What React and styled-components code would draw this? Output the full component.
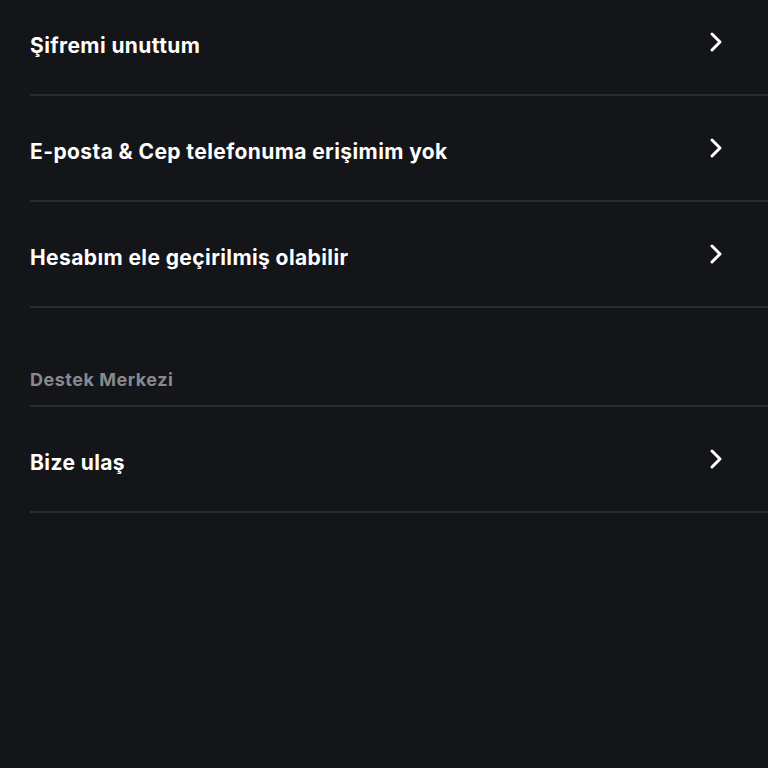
import React from "react"
import styled, { createGlobalStyle } from "styled-components"

const GlobalStyle = createGlobalStyle`
  html, body {
    margin: 0;
    padding: 0;
    background: #141519;
  }
  body {
    font-family: Inter, "Noto Sans", "Liberation Sans", sans-serif;
    -webkit-font-smoothing: antialiased;
  }
`

const Page = styled.div`
  width: 768px;
  height: 768px;
  overflow: hidden;
  background: #141519;
  padding-left: 30px;
  box-sizing: border-box;
`

const List = styled.div`
  display: flex;
  flex-direction: column;
  margin-top: ${p => p.$offset || 0}px;
`

const Row = styled.div`
  display: flex;
  align-items: center;
  justify-content: space-between;
  height: 104px;
  padding-right: 45px;
  border-bottom: 2px solid #2b2c30;
  cursor: pointer;
`

const Label = styled.span`
  color: #ffffff;
  font-size: 21px;
  font-weight: 700;
  letter-spacing: 0.4px;
  padding-top: 7px;
`

const SectionTitle = styled.div`
  color: #88898d;
  font-size: 18px;
  font-weight: 700;
  letter-spacing: 0.5px;
  padding: 61px 0 15px;
  border-bottom: 2px solid #2b2c30;
`

const Chevron = () => (
  <svg width="14" height="22" viewBox="0 0 14 22" fill="none">
    <path d="M3 3l8 8-8 8" stroke="#fff" strokeWidth="3" strokeLinecap="round" strokeLinejoin="round" />
  </svg>
)

const items = [
  "Şifremi unuttum",
  "E-posta & Cep telefonuma erişimim yok",
  "Hesabım ele geçirilmiş olabilir",
]

export default function App() {
  return (
    <Page>
      <GlobalStyle />
      <List $offset={-10}>
        {items.map(t => (
          <Row key={t}>
            <Label>{t}</Label>
            <Chevron />
          </Row>
        ))}
      </List>
      <SectionTitle>Destek Merkezi</SectionTitle>
      <List>
        <Row>
          <Label>Bize ulaş</Label>
          <Chevron />
        </Row>
      </List>
    </Page>
  )
}
